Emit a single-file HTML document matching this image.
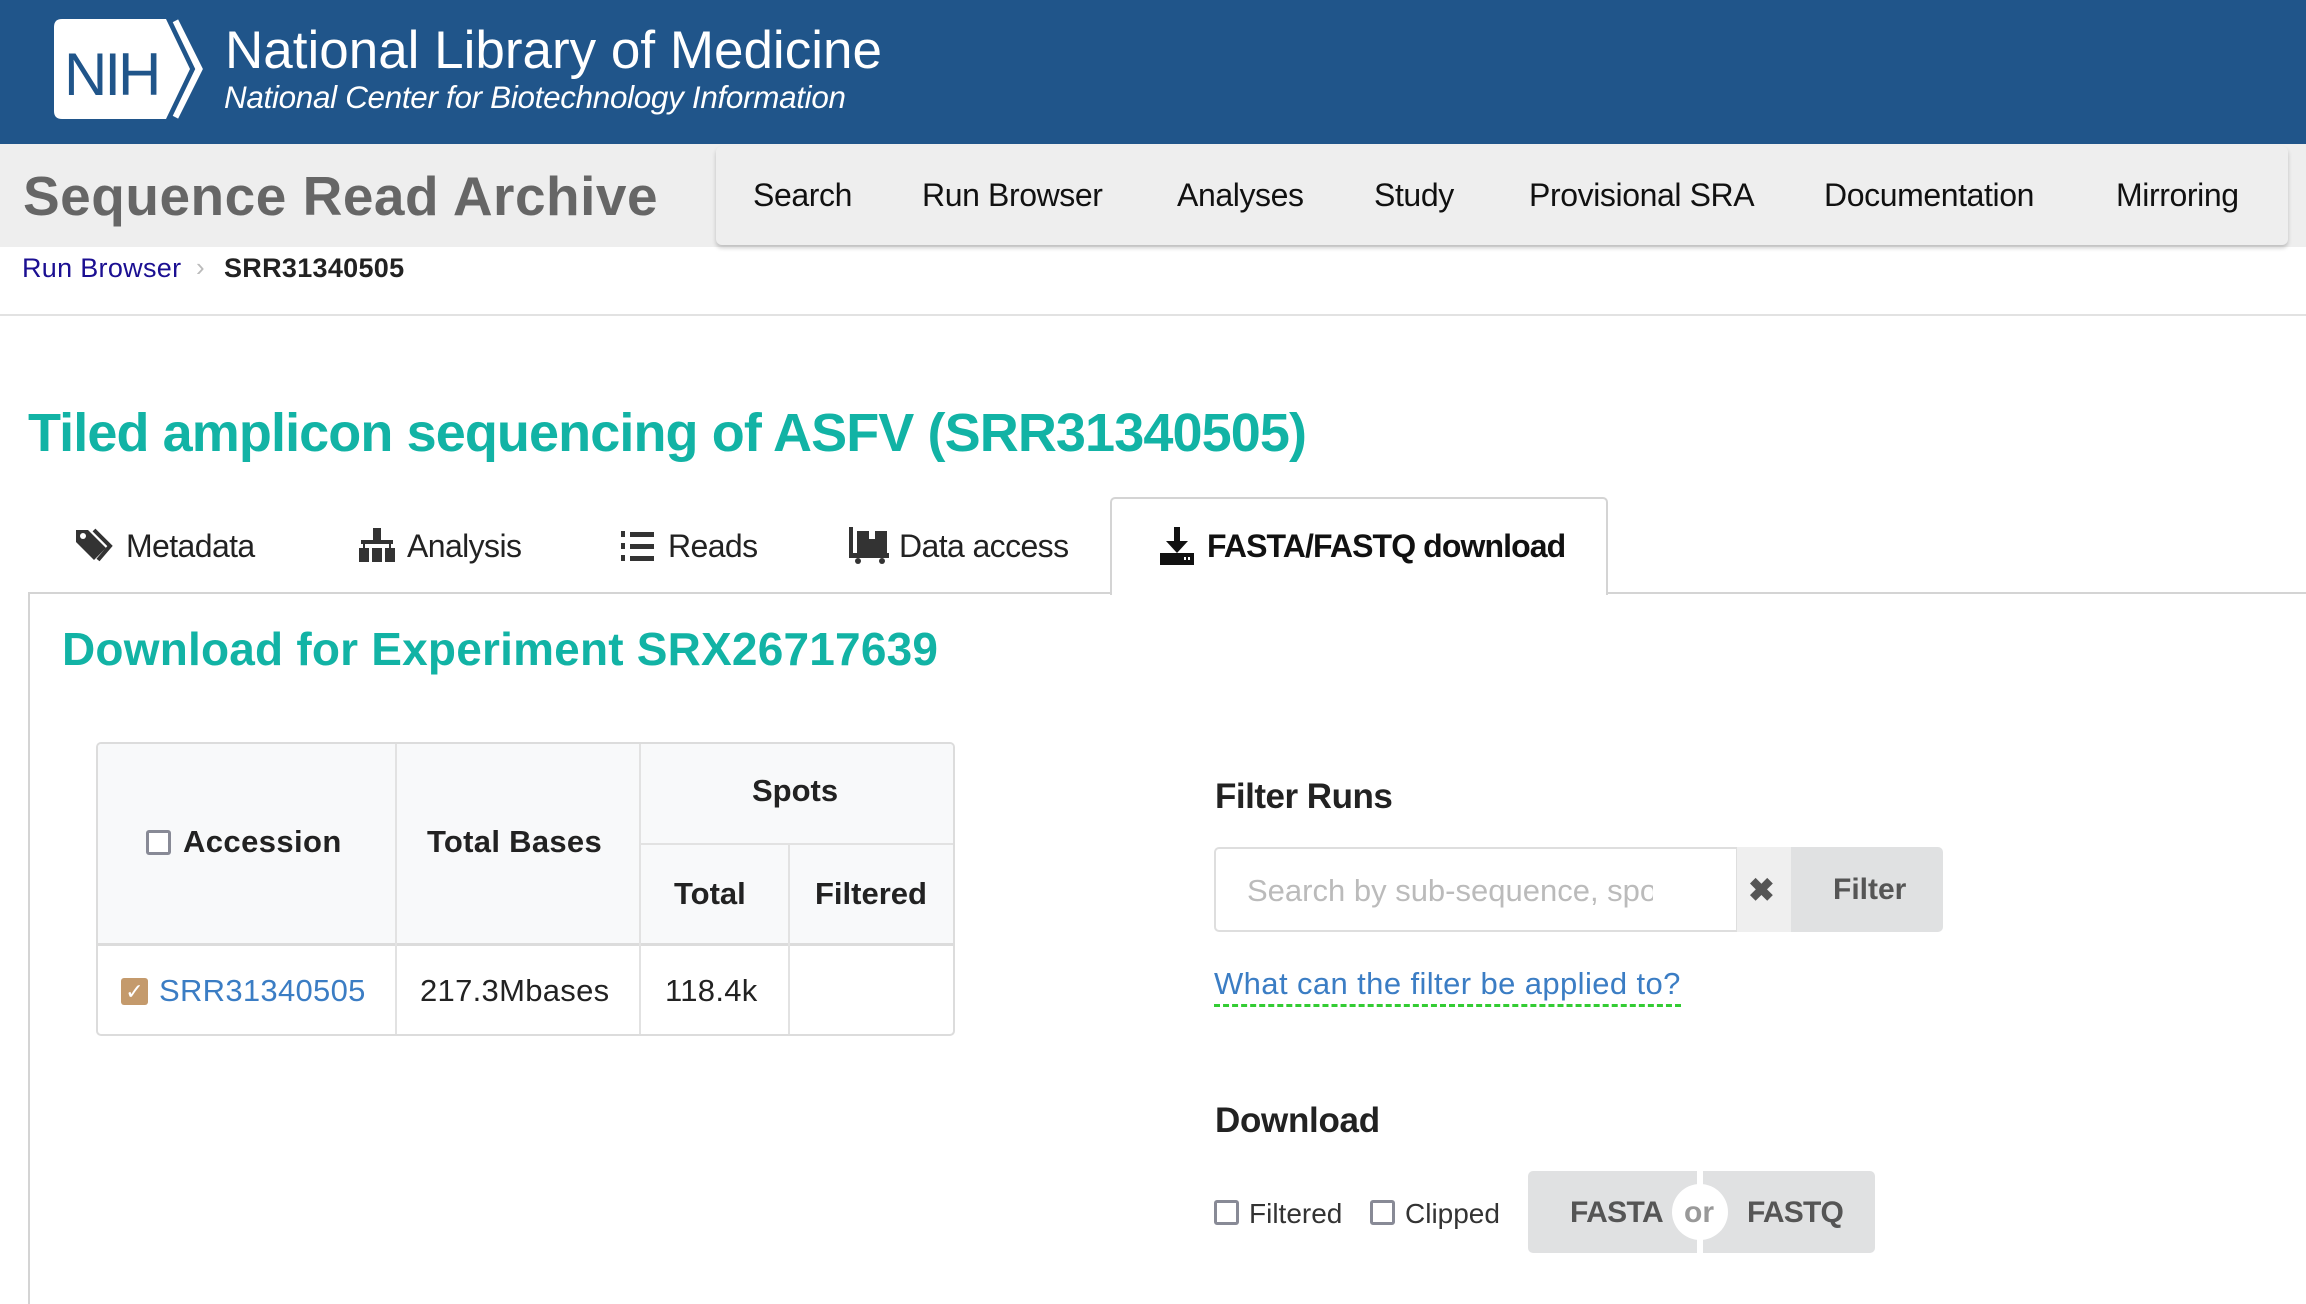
<!DOCTYPE html>
<html><head><meta charset="utf-8"><style>
*{margin:0;padding:0;box-sizing:border-box}
body{width:2306px;height:1304px;position:relative;overflow:hidden;background:#fff;font-family:"Liberation Sans",sans-serif;color:#222}
.a{position:absolute;white-space:nowrap}
.hdr{left:0;top:0;width:2306px;height:144px;background:#20558a}
.bar{left:0;top:144px;width:2306px;height:103px;background:#eeeeee}
.nav{left:716px;top:146px;width:1572px;height:99px;background:#eeeeee;border-radius:6px;box-shadow:0 3px 4px rgba(0,0,0,.2)}
.nv{top:177px;font-size:32px;color:#111;letter-spacing:-0.4px}
.tab{top:528px;font-size:32px;color:#222;letter-spacing:-0.6px}
.teal{color:#12b3a5;font-weight:bold}
.th{font-size:31px;font-weight:bold;color:#222}
.cb{display:inline-block;width:25px;height:25px;border:3px solid #888a96;border-radius:3px;background:#fff}
</style></head><body>
<div class="a hdr"></div>
<svg class="a" style="left:54px;top:19px" width="152" height="100" viewBox="0 0 152 100">
<path d="M8 0H112L136 50L112 100H8Q0 100 0 92V8Q0 0 8 0Z" fill="#fff"/>
<path d="M121 2L145 50L121 98" stroke="#fff" stroke-width="7" fill="none"/>
<path d="M115 0L139 50L115 100" stroke="#20558a" stroke-width="4" fill="none"/>
<text x="10" y="76" font-family="Liberation Sans" font-size="60" fill="#20558a" letter-spacing="-3">NIH</text>
</svg>
<div class="a" style="left:225px;top:20px;font-size:53px;color:#fff">National Library of Medicine</div>
<div class="a" style="left:224px;top:80px;font-size:31.4px;color:#fff;font-style:italic;letter-spacing:-0.3px">National Center for Biotechnology Information</div>
<div class="a bar"></div>
<div class="a" style="left:23px;top:164px;font-size:55px;font-weight:bold;color:#666;letter-spacing:0.5px">Sequence Read Archive</div>
<div class="a nav"></div>
<div class="a nv" style="left:753px">Search</div>
<div class="a nv" style="left:922px">Run Browser</div>
<div class="a nv" style="left:1177px">Analyses</div>
<div class="a nv" style="left:1374px">Study</div>
<div class="a nv" style="left:1529px">Provisional SRA</div>
<div class="a nv" style="left:1824px">Documentation</div>
<div class="a nv" style="left:2116px">Mirroring</div>
<div class="a" style="left:22px;top:253px;font-size:27px;color:#1b0f92;letter-spacing:0.3px">Run Browser</div>
<div class="a" style="left:196px;top:252px;font-size:26px;color:#bbb">›</div>
<div class="a" style="left:224px;top:253px;font-size:27px;font-weight:bold;color:#222;letter-spacing:0.3px">SRR31340505</div>
<div class="a" style="left:0;top:314px;width:2306px;height:2px;background:#e2e2e2"></div>
<div class="a teal" style="left:28px;top:402px;font-size:54px;letter-spacing:-0.9px">Tiled amplicon sequencing of ASFV (SRR31340505)</div>
<!-- tabs -->
<div class="a" style="left:28px;top:592px;width:2278px;height:2px;background:#d4d4d4"></div>
<div class="a" style="left:28px;top:592px;width:2px;height:712px;background:#d4d4d4"></div>
<div class="a" style="left:1110px;top:497px;width:498px;height:98px;background:#fff;border:2px solid #d4d4d4;border-bottom:none;border-radius:5px 5px 0 0"></div>
<svg class="a" style="left:76px;top:528px" width="38" height="36" viewBox="0 0 38 36"><path d="M0 2V14L18 32L30 20L12 2Z" fill="#333"/><circle cx="7" cy="8" r="3" fill="#fff"/><path d="M18 2L34 18L22 32" stroke="#333" stroke-width="4" fill="none"/></svg>
<div class="a tab" style="left:126px">Metadata</div>
<svg class="a" style="left:357px;top:528px" width="40" height="36" viewBox="0 0 40 36"><rect x="16" y="0" width="8" height="12" fill="#333"/><rect x="4" y="12" width="32" height="4" fill="#333"/><rect x="2" y="20" width="10" height="14" fill="#333"/><rect x="15" y="20" width="10" height="14" fill="#333"/><rect x="28" y="20" width="10" height="14" fill="#333"/><rect x="6" y="15" width="2" height="6" fill="#333"/><rect x="32" y="15" width="2" height="6" fill="#333"/></svg>
<div class="a tab" style="left:407px">Analysis</div>
<svg class="a" style="left:621px;top:530px" width="34" height="32" viewBox="0 0 34 32"><rect x="0" y="1" width="4" height="6" fill="#333"/><rect x="0" y="13" width="4" height="6" fill="#333"/><rect x="0" y="25" width="4" height="6" fill="#333"/><rect x="9" y="2" width="24" height="5" fill="#333"/><rect x="9" y="14" width="24" height="5" fill="#333"/><rect x="9" y="26" width="24" height="5" fill="#333"/></svg>
<div class="a tab" style="left:668px">Reads</div>
<svg class="a" style="left:849px;top:527px" width="40" height="38" viewBox="0 0 40 38"><rect x="0" y="0" width="4" height="30" fill="#333"/><rect x="0" y="26" width="40" height="5" fill="#333"/><rect x="8" y="4" width="30" height="22" fill="#333"/><rect x="20" y="4" width="6" height="8" fill="#fff"/><circle cx="9" cy="34" r="3" fill="#333"/><circle cx="33" cy="34" r="3" fill="#333"/></svg>
<div class="a tab" style="left:899px">Data access</div>
<svg class="a" style="left:1160px;top:527px" width="34" height="38" viewBox="0 0 34 38"><rect x="14" y="0" width="6" height="18" fill="#111"/><path d="M6 14H28L17 26Z" fill="#111"/><rect x="0" y="26" width="34" height="12" fill="#111"/><rect x="24" y="30" width="2" height="3" fill="#fff"/><rect x="28" y="30" width="2" height="3" fill="#fff"/></svg>
<div class="a tab" style="left:1207px;font-weight:bold;color:#111;letter-spacing:-0.9px">FASTA/FASTQ download</div>
<div class="a teal" style="left:62px;top:622px;font-size:46px;letter-spacing:0.2px">Download for Experiment SRX26717639</div>
<!-- table -->
<div class="a" style="left:96px;top:742px;width:859px;height:294px;border:2px solid #dcdcdc;border-radius:5px;background:#fff;overflow:hidden">
 <div class="a" style="left:0;top:0;width:857px;height:200px;background:#f8f9fa"></div>
 <div class="a" style="left:0;top:199px;width:857px;height:3px;background:#dcdcdc"></div>
 <div class="a" style="left:297px;top:0;width:2px;height:292px;background:#e2e2e2"></div>
 <div class="a" style="left:541px;top:0;width:2px;height:292px;background:#e2e2e2"></div>
 <div class="a" style="left:690px;top:100px;width:2px;height:192px;background:#e2e2e2"></div>
 <div class="a" style="left:541px;top:99px;width:316px;height:2px;background:#e2e2e2"></div>
</div>
<div class="a" style="left:146px;top:830px"><span class="cb"></span></div>
<div class="a th" style="left:183px;top:824px;letter-spacing:0.4px">Accession</div>
<div class="a th" style="left:427px;top:824px;letter-spacing:0.3px">Total Bases</div>
<div class="a th" style="left:752px;top:773px">Spots</div>
<div class="a th" style="left:674px;top:876px">Total</div>
<div class="a th" style="left:815px;top:876px">Filtered</div>
<div class="a" style="left:121px;top:978px;width:27px;height:27px;background:#c49a6c;border-radius:3px;color:#fff;font-size:22px;text-align:center;line-height:27px">✓</div>
<div class="a" style="left:159px;top:973px;font-size:31px;color:#3b7dc4;letter-spacing:0.3px">SRR31340505</div>
<div class="a" style="left:420px;top:973px;font-size:31px;color:#222;letter-spacing:0.3px">217.3Mbases</div>
<div class="a" style="left:665px;top:973px;font-size:31px;color:#222;letter-spacing:0.3px">118.4k</div>
<!-- filter -->
<div class="a" style="left:1215px;top:777px;font-size:35px;font-weight:bold;color:#222;letter-spacing:-0.5px">Filter Runs</div>
<div class="a" style="left:1214px;top:847px;width:524px;height:85px;border:2px solid #dedede;border-radius:5px 0 0 5px;background:#fff"></div>
<div class="a" style="left:1247px;top:873px;font-size:31px;color:#bbb;letter-spacing:0px;width:406px;overflow:hidden">Search by sub-sequence, spot</div>
<div class="a" style="left:1737px;top:847px;width:55px;height:85px;background:#efefef"></div>
<div class="a" style="left:1748px;top:871px;font-size:32px;color:#555;font-weight:bold">✖</div>
<div class="a" style="left:1791px;top:847px;width:152px;height:85px;background:#e0e1e2;border-radius:0 5px 5px 0"></div>
<div class="a" style="left:1833px;top:873px;font-size:30px;font-weight:bold;color:#555">Filter</div>
<div class="a" style="left:1214px;top:966px;font-size:31px;color:#3b7dc4;letter-spacing:0.4px;border-bottom:3px dashed #3c3;padding-bottom:2px">What can the filter be applied to?</div>
<div class="a" style="left:1215px;top:1101px;font-size:35px;font-weight:bold;color:#222;letter-spacing:-0.3px">Download</div>
<div class="a" style="left:1214px;top:1200px"><span class="cb"></span></div>
<div class="a" style="left:1249px;top:1198px;font-size:28px;color:#333">Filtered</div>
<div class="a" style="left:1370px;top:1200px"><span class="cb"></span></div>
<div class="a" style="left:1405px;top:1198px;font-size:28px;color:#333">Clipped</div>
<div class="a" style="left:1528px;top:1171px;width:169px;height:82px;background:#e0e1e2;border-radius:5px 0 0 5px"></div>
<div class="a" style="left:1703px;top:1171px;width:172px;height:82px;background:#e0e1e2;border-radius:0 5px 5px 0"></div>
<div class="a" style="left:1672px;top:1184px;width:56px;height:56px;background:#fff;border-radius:50%"></div>
<div class="a" style="left:1570px;top:1196px;font-size:30px;font-weight:bold;color:#555;letter-spacing:-0.6px">FASTA</div>
<div class="a" style="left:1684px;top:1196px;font-size:30px;font-weight:bold;color:#999">or</div>
<div class="a" style="left:1747px;top:1196px;font-size:30px;font-weight:bold;color:#555;letter-spacing:-0.8px">FASTQ</div>
</body></html>
